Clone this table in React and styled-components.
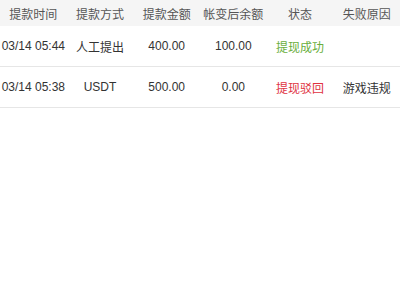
import React from "react";
import styled, { createGlobalStyle } from "styled-components";

const GlobalStyle = createGlobalStyle`
  body {
    margin: 0;
    background: #fff;
    font-family: "Helvetica Neue", "Liberation Sans", "Noto Sans CJK SC", sans-serif;
  }
`;

const Table = styled.div`
  width: 400px;
  display: flex;
  flex-direction: column;
`;

const HeaderRow = styled.div`
  display: grid;
  grid-template-columns: repeat(6, 1fr);
  height: 26px;
  align-items: center;
  background: #f5f5f5;
  color: #555;
  font-size: 12px;
`;

const Row = styled.div`
  display: grid;
  grid-template-columns: repeat(6, 1fr);
  height: 40px;
  align-items: center;
  border-bottom: 1px solid #e6e6e6;
  color: #333;
  font-size: 12px;
`;

const Cell = styled.div`
  text-align: center;
  white-space: nowrap;
  color: ${({ tone }) =>
    tone === "ok" ? "#6aae3c" : tone === "fail" ? "#e0333f" : "inherit"};
`;

const headers = ["提款时间", "提款方式", "提款金额", "帐变后余额", "状态", "失败原因"];

const rows = [
  { time: "03/14 05:44", method: "人工提出", amount: "400.00", balance: "100.00", status: "提现成功", tone: "ok", reason: "" },
  { time: "03/14 05:38", method: "USDT", amount: "500.00", balance: "0.00", status: "提现驳回", tone: "fail", reason: "游戏违规" },
];

export default function App() {
  return (
    <>
      <GlobalStyle />
      <Table>
        <HeaderRow>
          {headers.map((h) => (
            <Cell key={h}>{h}</Cell>
          ))}
        </HeaderRow>
        {rows.map((r) => (
          <Row key={r.time}>
            <Cell>{r.time}</Cell>
            <Cell>{r.method}</Cell>
            <Cell>{r.amount}</Cell>
            <Cell>{r.balance}</Cell>
            <Cell tone={r.tone}>{r.status}</Cell>
            <Cell>{r.reason}</Cell>
          </Row>
        ))}
      </Table>
    </>
  );
}
